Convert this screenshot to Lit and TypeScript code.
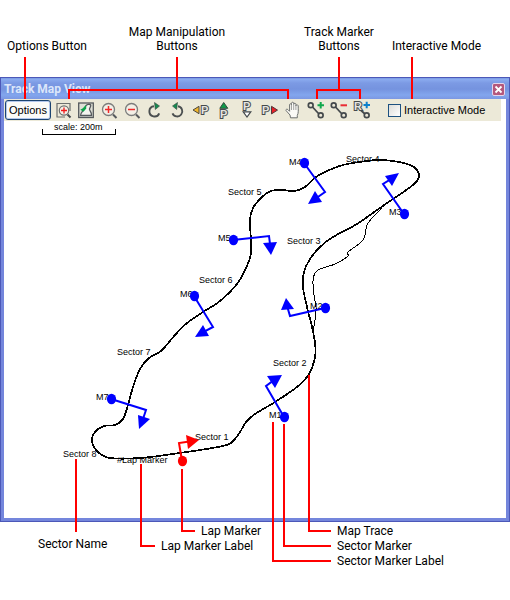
import { LitElement, html, svg, css } from "lit";
import { customElement } from "lit/decorators.js";

type Pt = [number, number];

/** Smooth curve through every point (Catmull-Rom converted to cubic Béziers). */
function smooth(points: Pt[], closed: boolean): string {
  const n = points.length;
  const at = (i: number): Pt =>
    closed ? points[(i + n) % n] : points[Math.max(0, Math.min(n - 1, i))];
  let d = `M${points[0][0]} ${points[0][1]}`;
  const count = closed ? n : n - 1;
  for (let i = 0; i < count; i++) {
    const [a, b, c, e] = [at(i - 1), at(i), at(i + 1), at(i + 2)];
    const r = (v: number) => Math.round(v * 10) / 10;
    d += `C${r(b[0] + (c[0] - a[0]) / 6)} ${r(b[1] + (c[1] - a[1]) / 6)} ${r(c[0] - (e[0] - b[0]) / 6)} ${r(c[1] - (e[1] - b[1]) / 6)} ${c[0]} ${c[1]}`;
  }
  return closed ? d + "Z" : d;
}

const CIRCUIT: Pt[] = [
  [251, 240], [250, 220], [253, 208], [262, 197], [271, 191], [282, 190], [295, 191], [305, 187],
  [316, 177], [327, 171], [343, 165], [360, 162], [377, 160], [393, 161], [410, 165], [417, 170],
  [419, 177], [413, 185], [393, 199], [377, 210], [357, 224], [333, 237], [320, 247], [310, 259],
  [304, 272], [303, 287], [307, 307], [312, 327], [315, 343], [315, 357], [309, 374], [297, 387],
  [275, 402], [255, 414], [246, 422], [240, 432], [233, 441], [223, 446], [180, 453], [140, 458],
  [110, 458], [98, 452], [92, 441], [95, 432], [104, 426], [115, 425], [123, 419], [128, 405],
  [133, 387], [140, 369], [149, 358], [161, 351], [175, 335], [187, 323], [203, 312], [220, 301],
  [237, 284], [247, 266], [251, 253],
];

const PIT_LANE: Pt[] = [
  [382, 208], [374, 216], [367, 225], [363, 240], [348, 252], [348, 256], [335, 264], [320, 269],
  [315, 273], [313, 281], [314, 295], [316, 307], [315, 320], [313, 332],
];

interface Marker { name: string; label: Pt; dot: Pt; bend: Pt; head: Pt[]; }

const MARKERS: Marker[] = [
  { name: "M1", label: [269, 418], dot: [284, 417], bend: [266, 386], head: [[282, 375], [267, 376], [275, 388]] },
  { name: "M2", label: [310, 309], dot: [325, 308], bend: [290, 316], head: [[286, 298], [281, 310], [294, 309]] },
  { name: "M3", label: [389, 215], dot: [404, 214], bend: [383, 184], head: [[399, 173], [385, 176], [392, 186]] },
  { name: "M4", label: [289, 165], dot: [304, 163], bend: [325, 192], head: [[308, 204], [322, 202], [315, 191]] },
  { name: "M5", label: [218, 241], dot: [233, 240], bend: [269, 236], head: [[271, 255], [263, 243], [277, 242]] },
  { name: "M6", label: [180, 297], dot: [194, 296], bend: [213, 327], head: [[195, 337], [203, 325], [209, 336]] },
  { name: "M7", label: [96, 400], dot: [111, 399], bend: [146, 410], head: [[139, 429], [138, 415], [150, 419]] },
];

const LAP: Marker = {
  name: "#Lap Marker", label: [117, 463], dot: [182, 461], bend: [179, 443],
  head: [[199, 440], [186, 435], [188, 449]],
};

const SECTORS: [string, number, number][] = [
  ["Sector 1", 195, 440], ["Sector 2", 273, 366], ["Sector 3", 287, 244], ["Sector 4", 346, 162],
  ["Sector 5", 228, 195], ["Sector 6", 199, 283], ["Sector 7", 117, 355], ["Sector 8", 63, 457],
];

const lens = (sign: unknown) => svg`
  <path d="M15 15.500l3.500 3.500" stroke="#55595c" stroke-width="2"/>
  <circle cx="10.500" cy="10.500" r="6" fill="#f3efe6" stroke="#7b7d7c" stroke-width="1.300"/>
  ${sign}`;
const nodes = svg`
  <path d="M7.500 8l6.500 7" stroke="#44494c" stroke-width="1.800"/>
  <circle cx="5.700" cy="6.300" r="2.400" fill="#ece9d8" stroke="#44494c" stroke-width="1.700"/>
  <circle cx="15.700" cy="16.300" r="2.400" fill="#ece9d8" stroke="#44494c" stroke-width="1.700"/>`;
const letter = (c: string, x: number, y: number) =>
  svg`<text class="glyph" x=${x} y=${y}>${c}</text>`;

const TOOLS: [string, unknown][] = [
  ["Zoom to area", svg`
    <path d="M18 12V4.500H5v13.500h8" fill="none" stroke="#6d706f" stroke-width="1.200"/>
    <path d="M15.500 15.500l3 3" stroke="#44494c" stroke-width="2"/>
    <circle cx="12" cy="11.500" r="4.700" fill="#f6f1e8" stroke="#6d706f" stroke-width="1.200"/>
    <path d="M9 11.500h6M12 8.500v6" stroke="#f01818" stroke-width="1.300"/>`],
  ["Fit map", svg`
    <rect x="3.700" y="4" width="14.600" height="14.500" fill="#dfe0d6" stroke="#55595c" stroke-width="1.300"/>
    <path d="M5.500 16.500C5.500 13.500 8.500 12 10.500 7.500c1.200-2.500 4.200-2.800 5.200-1.500.6 1.500-1.500 3-1.200 4.500.3 1.700 2.300 2.500 2 6z" fill="#f4f5ee" stroke="#55595c" stroke-width="1.300"/>
    <path d="M5.300 10.800l2.200-1.300L11 6l.3 3.500-2.800 3.300z" fill="#0ea34a"/>`],
  ["Zoom in", lens(svg`<path d="M7 10.500h7M10.500 7v7" stroke="#f02828" stroke-width="1.500"/>`)],
  ["Zoom out", lens(svg`<path d="M7 10.500h7" stroke="#f02828" stroke-width="1.500"/>`)],
  ["Rotate clockwise", svg`
    <path d="M10 7.300a5.100 5.100 0 1 0 5.200 7" fill="none" stroke="#4b4f50" stroke-width="1.900"/>
    <path d="M10.500 3.500l5 3.500-4.200 3.500z" fill="#158a50" stroke="#3c4440" stroke-width=".6"/>`],
  ["Rotate anticlockwise", svg`
    <path d="M11 7.300a5.100 5.100 0 1 1-5.500 7" fill="none" stroke="#4b4f50" stroke-width="1.900"/>
    <path d="M10.500 3.500L5.500 7l4.200 3.500z" fill="#158a50" stroke="#3c4440" stroke-width=".6"/>`],
  ["Pan left", svg`<path d="M3 11l6-3.700v7.400z" fill="#f0b62c" stroke="#4b4740"/>${letter("P", 11, 15)}`],
  ["Pan up", svg`<path d="M10.700 3.500L6.800 9.300h8z" fill="#0c9a48" stroke="#34483c"/>${letter("P", 7, 19)}`],
  ["Pan down", svg`${letter("P", 7, 11)}<path d="M7.200 12.800h7.600L11 18z" fill="#fff" stroke="#44494c" stroke-width="1.200"/>`],
  ["Pan right", svg`${letter("P", 3, 15)}<path d="M12.500 7.300v7.600l6-3.800z" fill="#e82028" stroke="#50383a"/>`],
  ["Drag map", svg`
    <path d="M8.500 18.800L8 16 4 11.500c-.300-1.500 1.200-1.600 2-.800l1.600 1.600V5.800c0-1.400 1.900-1.400 1.900 0V4.300c0-1.400 2.200-1.400 2.200 0v.900c0-1.300 2.200-1.300 2.200.100v1.500c0-1.300 2.300-1.300 2.300.200 0 4 .500 7-.900 9.400v2.400z" fill="#fbfaf6" stroke="#6d706f"/>
    <path d="M9.500 5.500V11M11.700 5v6M13.900 6v5" stroke="#8b8e8c" stroke-width=".8"/>`],
  ["Add marker", svg`${nodes}<path d="M12.500 6.300H19M15.700 3v6.600" stroke="#10a84c" stroke-width="2"/>`],
  ["Remove marker", svg`${nodes}<path d="M12.500 6.300H19" stroke="#ea2c34" stroke-width="2"/>`],
  ["Add reference marker", svg`
    <path d="M9 10.500l5 4.500" stroke="#44494c" stroke-width="1.800"/>
    <circle cx="15.700" cy="16.300" r="2.400" fill="#ece9d8" stroke="#44494c" stroke-width="1.700"/>
    ${letter("R", 3, 11)}
    <path d="M12.500 6H19M15.700 2.700v6.600" stroke="#0c80cc" stroke-width="2"/>`],
];

@customElement("track-map")
export class TrackMap extends LitElement {
  static styles = css`
    :host { display: block; }
    svg { display: block; width: 100%; height: 397px; }
    text { font: 9px "Liberation Sans", Arial, sans-serif; fill: #000; }
    .trace, .pit, .scale { fill: none; stroke: #000; shape-rendering: crispEdges; }
    .trace { stroke-width: 1.7px; }
    .pit, .scale { stroke-width: 1px; }
    .blue { fill: #00f; stroke: #00f; }
    .red { fill: #f00; stroke: #f00; }
    .arm { fill: none; stroke-width: 2px; }
    .solid { stroke: none; }
  `;

  private marker(m: Marker, tone: string) {
    const cx = (m.head[0][0] + m.head[1][0] + m.head[2][0]) / 3;
    const cy = (m.head[0][1] + m.head[1][1] + m.head[2][1]) / 3;
    return svg`<g class=${tone}>
      <path class="arm" d=${`M${m.dot.join(" ")}L${m.bend.join(" ")}L${cx} ${cy}`}/>
      <polygon class="solid" points=${m.head.map((p) => p.join(",")).join(" ")}/>
      <ellipse class="solid" cx=${m.dot[0] + 0.5} cy=${m.dot[1]} rx="4.600" ry="5.200"/>
    </g>`;
  }

  render() {
    return html`<svg viewBox="4 121 502 397" preserveAspectRatio="xMinYMin meet" role="img" aria-label="Track map">
      <path class="scale" d="M42.500 129v5.500h73V129"/>
      <text x="54" y="130">scale: 200m</text>
      ${SECTORS.map(([name, x, y]) => svg`<text x=${x} y=${y}>${name}</text>`)}
      ${[...MARKERS, LAP].map((m) => svg`<text x=${m.label[0]} y=${m.label[1]}>${m.name}</text>`)}
      <path class="trace" d=${smooth(CIRCUIT, true)}/>
      <path class="pit" d=${smooth(PIT_LANE, false)}/>
      ${MARKERS.map((m) => this.marker(m, "blue"))}
      ${this.marker(LAP, "red")}
    </svg>`;
  }
}

@customElement("app-root")
export class AppRoot extends LitElement {
  static styles = css`
    :host {
      display: block;
      position: relative;
      min-height: 600px;
      background: #fff;
      color: #000;
      font: 12px/14px Roboto, Tahoma, sans-serif;
      white-space: nowrap;
    }
    .top {
      display: grid;
      grid-template-columns: 94px 166px 37px 84px 111px;
      align-items: end;
      text-align: center;
      padding: 25px 0 24px;
    }
    .track { grid-column: 4; }
    .window {
      border: solid #7486dc;
      border-width: 0 4px 4px;
      outline: 1px solid #4c58b8;
      outline-offset: -1px;
    }
    .title {
      display: flex;
      align-items: center;
      justify-content: space-between;
      height: 22px;
      margin: 0 -4px;
      padding: 0 5px 0 4px;
      box-sizing: border-box;
      background: linear-gradient(#5878cc 0, #8cacf0 2px, #7c9ae4 6px, #7593df 12px, #82a6ee 18px, #7c98e2 22px);
    }
    h1 { margin: 2px 0 0; font: bold 12px/20px Roboto, sans-serif; color: #dbe6fa; }
    .close {
      display: flex;
      width: 13px;
      height: 13px;
      padding: 0;
      margin-top: 3px;
      box-sizing: border-box;
      border: 1px solid #e4d4ea;
      border-radius: 2px;
      background: #b4587c;
    }
    .tools {
      display: flex;
      align-items: center;
      height: 22px;
      margin-right: 5px;
      padding-left: 1px;
      background: #ece9d8;
      font: 11px/14px "Liberation Sans", Arial, sans-serif;
    }
    .options {
      width: 46px;
      height: 20px;
      margin-right: 1px;
      padding: 0;
      box-sizing: border-box;
      border: 1px solid #1c4470;
      border-radius: 3px;
      background: #fbfbf8;
      box-shadow: inset 0 0 0 1px #b4c8ec;
      font: inherit;
      color: #000;
    }
    .tool { display: block; width: 23px; height: 22px; padding: 0; border: 0; background: none; }
    .tool svg, .close svg { display: block; }
    .glyph {
      font: bold 11px "Liberation Sans", sans-serif;
      fill: #e4e4e0;
      stroke: #44494c;
      stroke-width: 2px;
      paint-order: stroke;
    }
    label { display: flex; align-items: center; gap: 3px; margin-left: 14px; }
    input {
      appearance: none;
      width: 13px;
      height: 13px;
      margin: 0;
      border: 1px solid #1c5180;
      background: linear-gradient(135deg, #dcdcd8, #fff);
    }
    .bottom {
      display: grid;
      grid-template-columns: 123px 176px auto;
      padding-top: 2px;
      line-height: 15px;
    }
    .bottom span { display: block; }
    .sector { padding: 13px 0 0 38px; }
    .lap { padding-left: 38px; }
    .lap .first { padding-left: 40px; }
    .marks { padding-left: 38px; }
    .leaders {
      position: absolute;
      top: 0;
      left: 0;
      width: 100%;
      height: 600px;
      pointer-events: none;
      fill: none;
      stroke: #f00;
      stroke-width: 2px;
      shape-rendering: crispEdges;
    }
  `;

  render() {
    return html`
      <div class="top">
        <span>Options Button</span>
        <span>Map Manipulation<br />Buttons</span>
        <span class="track">Track Marker<br />Buttons</span>
        <span>Interactive Mode</span>
      </div>
      <section class="window">
        <header class="title">
          <h1>Track Map View</h1>
          <button class="close" aria-label="Close">
            <svg width="11" height="11" viewBox="0 0 11 11"><path d="M2.500 2.500l6 6M8.500 2.500l-6 6" stroke="#fff" stroke-width="1.800"/></svg>
          </button>
        </header>
        <div class="tools">
          <button class="options">Options</button>
          ${TOOLS.map(([name, icon]) => html`<button class="tool" aria-label=${name}>
            <svg width="23" height="22" viewBox="0 0 23 22">${icon}</svg>
          </button>`)}
          <label><input type="checkbox" />Interactive Mode</label>
        </div>
        <track-map></track-map>
      </section>
      <div class="bottom">
        <span class="sector">Sector Name</span>
        <div class="lap"><span class="first">Lap Marker</span><span>Lap Marker Label</span></div>
        <div class="marks"><span>Map Trace</span><span>Sector Marker</span><span>Sector Marker Label</span></div>
      </div>
      <svg class="leaders" viewBox="0 0 510 600" preserveAspectRatio="xMinYMin meet" aria-hidden="true">
        <path d="M25 57V99M177 57V90M69 99V90H288V99M339 57V90M317 99V90H360V99M412 57V99"/>
        <path d="M76 459V532M141 464V546H155M182 469V531H195M309 375V531H331M284 424V546H331M273 422V561H331"/>
      </svg>`;
  }
}
